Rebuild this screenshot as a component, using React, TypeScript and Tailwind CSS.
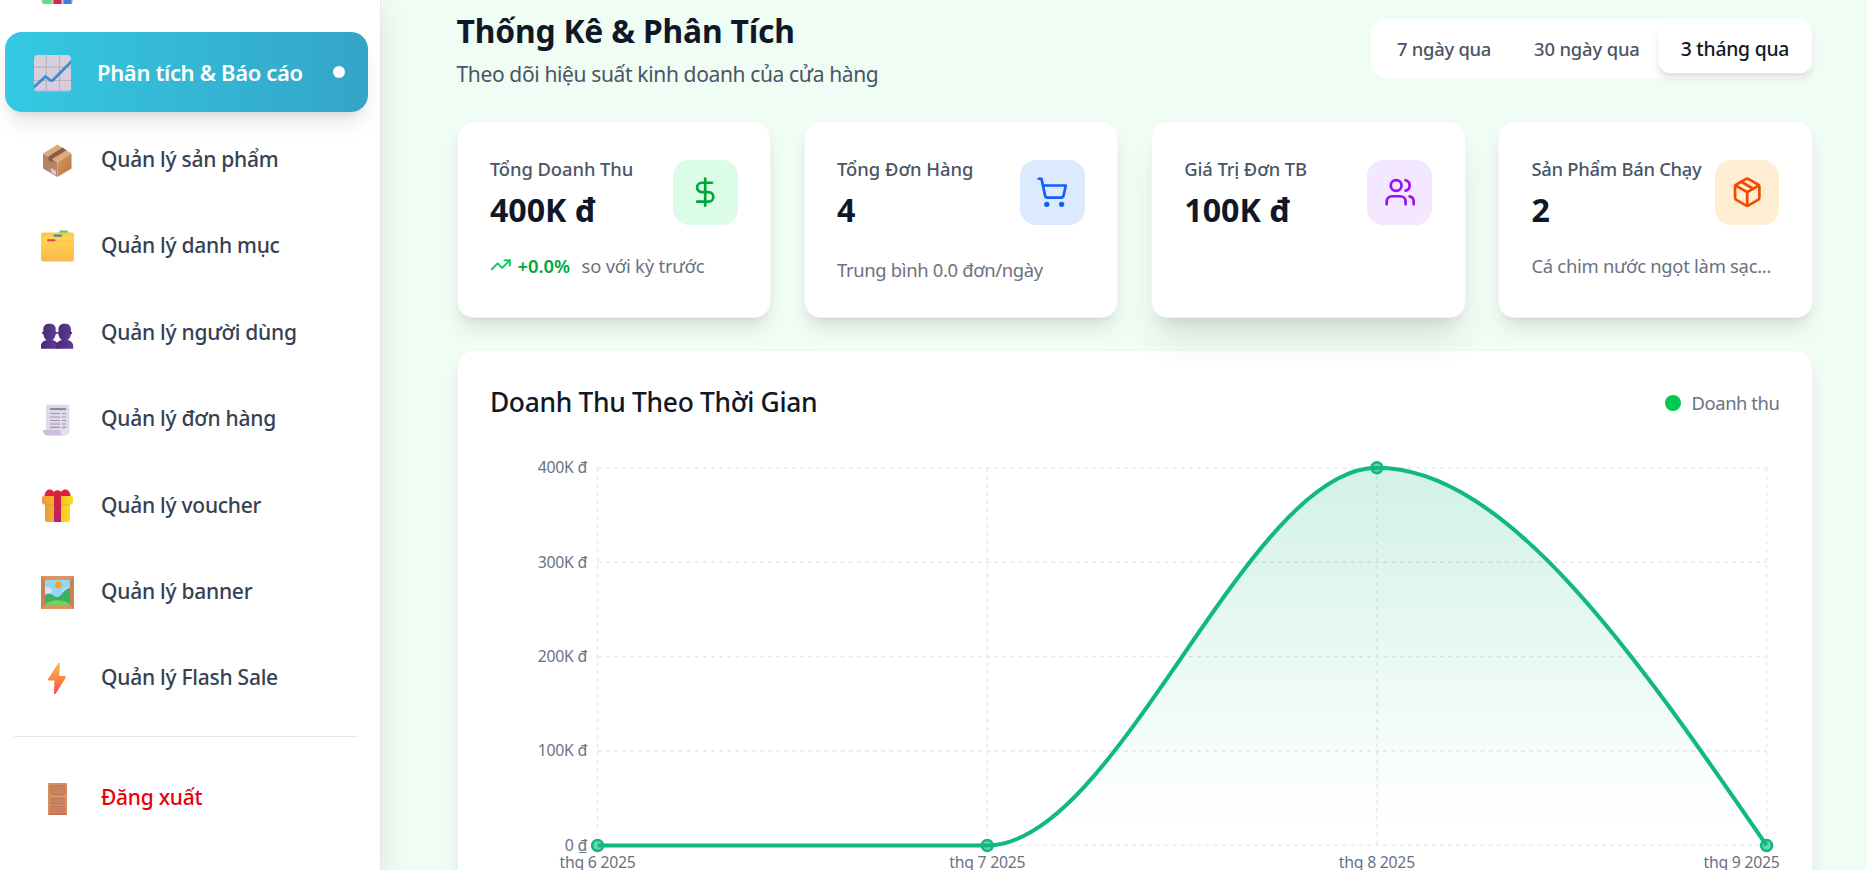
import type { ReactNode } from "react";
import { DollarSign, Package, ShoppingCart, TrendingUp, Users } from "lucide-react";

/* ---------- sidebar icons ---------- */

const BarChartIcon = () => (
  <svg viewBox="0 0 33 4" className="block h-[4px] w-[33px]">
    <path d="M0 0h32v1.5a3 3 0 0 1-3 2.5H3A3 3 0 0 1 0 1.500z" fill="#cfc6dc" />
    <rect x="2" y="0" width="8.500" height="4" fill="#5fdf85" />
    <rect x="12.500" y="0" width="8" height="4" fill="#d8244f" />
    <rect x="22.500" y="0" width="8" height="4" fill="#3d7ddb" />
  </svg>
);

const TrendChartIcon = () => (
  <svg viewBox="0 0 37 37" className="block size-[37px]">
    <defs>
      <linearGradient id="tc" x1="0" y1="0" x2="0" y2="1">
        <stop offset="0" stopColor="#d6d2dc" />
        <stop offset="0.930" stopColor="#d7cce2" />
        <stop offset="1" stopColor="#b79ccb" />
      </linearGradient>
      <clipPath id="tcc">
        <rect width="37" height="37" rx="4" />
      </clipPath>
    </defs>
    <g clipPath="url(#tcc)">
      <rect width="37" height="37" fill="url(#tc)" />
      <path d="M12.200 0v37M25.500 0v37M0 12.200h37M0 25.500h37" stroke="#b9b2bf" strokeWidth="1.200" />
      <path d="M-1 33L11.500 21.500L16.500 25.500Q17.800 26 19 25L38 6" fill="none" stroke="#3c8ad6" strokeWidth="2.800" strokeLinejoin="round" />
    </g>
  </svg>
);

const PackageIcon = () => (
  <svg viewBox="0 0 33 33" className="block size-[33px]">
    <defs>
      <linearGradient id="pkr" x1="0" y1="0" x2="1" y2="1">
        <stop offset="0" stopColor="#cf9a6c" />
        <stop offset="1" stopColor="#bd7338" />
      </linearGradient>
      <linearGradient id="pkl" x1="0" y1="0" x2="0" y2="1">
        <stop offset="0" stopColor="#b48063" />
        <stop offset="1" stopColor="#c08468" />
      </linearGradient>
    </defs>
    <path d="M2 9.500L16.500 18V33L2 24.500z" fill="url(#pkl)" />
    <path d="M30.500 9.500L16.500 18V33l14-8.500z" fill="url(#pkr)" />
    <path d="M16.500 0.500L30.500 9.500L16.500 18L2 9.500z" fill="#dbab7c" />
    <path d="M21.500 3.500L25.500 6.200L11.500 14.700V18.500L7.500 16.200V12.500z" fill="#8a5d49" />
    <path d="M10 24l5 2.800v4.400l-5-2.900z" fill="#d5c6dd" />
  </svg>
);

const FolderIcon = () => (
  <svg viewBox="0 0 33 33" className="block size-[33px]">
    <defs>
      <linearGradient id="fd" x1="0" y1="0" x2="0" y2="1">
        <stop offset="0" stopColor="#ffd34d" />
        <stop offset="1" stopColor="#fcb552" />
      </linearGradient>
    </defs>
    <rect x="18.500" y="0.500" width="8.500" height="4" rx="1.200" fill="#46cb7d" />
    <path d="M0 4.500a2 2 0 0 1 2-2h29a2 2 0 0 1 2 2V14H0z" fill="#fdca45" />
    <path d="M0 8.500a2 2 0 0 1 2-2h29a2 2 0 0 1 2 2V16H0z" fill="#ffd254" />
    <path d="M0 13a2 2 0 0 1 2-2h29a2 2 0 0 1 2 2v16a2.500 2.500 0 0 1-2.500 2.500h-28A2.500 2.500 0 0 1 0 29z" fill="url(#fd)" />
    <path d="M15 11.200H32" stroke="#f3bb40" strokeWidth="0.700" />
    <rect x="12.500" y="4.600" width="8.500" height="2.100" rx="1" fill="#3e86b8" />
    <rect x="6" y="9.200" width="8.500" height="2.100" rx="1" fill="#ef3a52" />
  </svg>
);

const PeopleIcon = () => (
  <svg viewBox="0 0 33 33" className="block size-[33px]">
    <defs>
      <linearGradient id="pp" x1="0" y1="0" x2="1" y2="0">
        <stop offset="0" stopColor="#4a2a78" />
        <stop offset="1" stopColor="#5f3b96" />
      </linearGradient>
    </defs>
    {[0, 15.200].map((x) => (
      <g key={x} transform={`translate(${x} 4.300)`} fill="url(#pp)">
        <path d="M8.500 3.500c4 0 6.200 2 6.200 5.500v4c0 4-2.500 7.500-6.200 7.500S2.300 17 2.300 13V9c0-3.500 2.200-5.500 6.200-5.500z" />
        <circle cx="2.300" cy="12.700" r="1.300" />
        <circle cx="14.700" cy="12.700" r="1.300" />
        <path d="M0 28.500v-3c0-3 2.500-5 6-5.700V18h5v1.800c3.500.700 6 2.700 6 5.700v3z" />
      </g>
    ))}
  </svg>
);

const ReceiptIcon = () => (
  <svg viewBox="0 0 33 33" className="block size-[33px]">
    <path d="M5 1l1.900 1.500L8.900 1l1.900 1.500L12.800 1l1.900 1.500L16.700 1l1.900 1.500L20.600 1l1.900 1.500L24.500 1l1.900 1.500L28.300 1V29H5z" fill="#dfd9e8" />
    <path d="M9 6h16" stroke="#8f8a99" strokeWidth="2.200" />
    <path d="M9 10.500h10M21 10.500h4M9 14h10M21 14h4M9 17.500h10M21 17.500h4M9 21h10M21 21h4M9 24.300h10M21 24.300h4" stroke="#9d99a6" strokeWidth="1.200" />
    <path d="M2 27h17.500c0 3.500 1.500 5.500 5 5.500H7c-3 0-5-1.800-5-5.500z" fill="#cdbde0" />
    <path d="M19.500 27c0 3.500 2 5.500 4.700 5.500s4.100-2 4.100-5V25z" fill="#e4dded" />
  </svg>
);

const GiftIcon = () => (
  <svg viewBox="0 0 33 33" className="block size-[33px]">
    <defs>
      <linearGradient id="gf" x1="0" y1="0" x2="1" y2="0">
        <stop offset="0" stopColor="#f0983a" />
        <stop offset="1" stopColor="#fbdc1f" />
      </linearGradient>
      <linearGradient id="gr" x1="0" y1="0" x2="0" y2="1">
        <stop offset="0" stopColor="#de2038" />
        <stop offset="1" stopColor="#b42468" />
      </linearGradient>
    </defs>
    <path d="M4 14h25v17a2 2 0 0 1-2 2H6a2 2 0 0 1-2-2z" fill="url(#gf)" />
    <path d="M3.500 6C4 2 7 0 9.500.600 12 1.200 13 4 16.500 4S21 1.200 23.500.600C26 0 29 2 29.500 6v2h-26z" fill="#e02239" />
    <rect x="1" y="7" width="31" height="8.500" rx="2" fill="url(#gf)" />
    <path d="M4 16H29" stroke="#d98a2c" strokeWidth="0.900" opacity="0.600" />
    <path d="M13 4a3.500 2.800 0 0 1 7 0v29h-7z" fill="url(#gr)" />
  </svg>
);

const PictureIcon = () => (
  <svg viewBox="0 0 33 33" className="block size-[33px]">
    <rect width="33" height="33" rx="0.800" fill="#dc9467" />
    <path d="M0 0L4 4V29L0 33zM33 0L29 4V29L33 33z" fill="#cb8158" />
    <rect x="4" y="4" width="25" height="25" fill="#93d8f3" />
    <circle cx="17.300" cy="9" r="3.400" fill="#f3a42e" />
    <path d="M4 11c4-.500 7 1.500 7 4 0 1.500-1 2-2 2H4zM29 11.500c-4-.500-7 1.500-8.500 5.500H29z" fill="#e6def3" />
    <path d="M4 19.500c3-2 6-2 9 .500 2 1.500 4 1.500 6 0 3-3 5-7.500 10-8V29H4z" fill="#37b368" />
    <path d="M4 29c3-6.500 22-6.500 25 0z" fill="#7cce5b" />
  </svg>
);

const BoltIcon = () => (
  <svg viewBox="0 0 33 33" className="block size-[33px]">
    <defs>
      <linearGradient id="bt" x1="0" y1="0" x2="0" y2="1">
        <stop offset="0" stopColor="#fdbb44" />
        <stop offset="0.550" stopColor="#fb8346" />
        <stop offset="1" stopColor="#f5404f" />
      </linearGradient>
    </defs>
    <path d="M17.200 1.200c.600-.900 1.800-.600 1.700.400l-.600 12.400h5.600c.900 0 1.300.800.900 1.500L15 31.300c-.700 1.100-2 .800-1.900-.400l.300-12.400H8c-.900 0-1.300-.800-.900-1.500z" fill="url(#bt)" />
  </svg>
);

const DoorIcon = () => (
  <svg viewBox="0 0 33 33" className="block size-[33px]">
    <rect x="7" y="1" width="19" height="32" rx="1" fill="#d98c5f" />
    <rect x="8" y="31" width="17" height="2" fill="#c4705f" />
    <g fill="#c48463" stroke="#b37351" strokeWidth="0.800">
      <rect x="9.800" y="3.500" width="13.500" height="9" rx="1" />
      <rect x="9.800" y="16.500" width="13.500" height="5.500" rx="1.500" />
      <rect x="9.800" y="24.500" width="13.500" height="5" rx="1.500" />
    </g>
    <circle cx="23.700" cy="14.700" r="1.400" fill="#e9a323" />
  </svg>
);

const navItems: { label: string; icon: ReactNode }[] = [
  { label: "Quản lý sản phẩm", icon: <PackageIcon /> },
  { label: "Quản lý danh mục", icon: <FolderIcon /> },
  { label: "Quản lý người dùng", icon: <PeopleIcon /> },
  { label: "Quản lý đơn hàng", icon: <ReceiptIcon /> },
  { label: "Quản lý voucher", icon: <GiftIcon /> },
  { label: "Quản lý banner", icon: <PictureIcon /> },
  { label: "Quản lý Flash Sale", icon: <BoltIcon /> },
];

function Sidebar() {
  return (
    <aside className="z-10 flex h-full w-[381px] shrink-0 flex-col border-r border-gray-200 bg-white shadow-[0_10px_28px_2px_rgba(0,0,0,0.09)]">
      <div className="h-[32px] shrink-0 pl-[41px]">
        <BarChartIcon />
      </div>
      <div className="ml-[5px] flex h-[80px] w-[363px] shrink-0 items-center rounded-[17px] bg-linear-to-r from-[#34c9e4] to-[#34a5c6] pl-[28.500px] shadow-[0_14px_21px_-4px_rgba(0,0,0,0.1),0_6px_9px_-5px_rgba(0,0,0,0.1)]">
        <div className="mt-[3px]">
          <TrendChartIcon />
        </div>
        <span className="ml-[26.500px] grow pt-[1px] text-[22px] font-semibold tracking-[-0.350px] whitespace-nowrap text-white">
          Phân tích &amp; Báo cáo
        </span>
        <span className="mr-[23px] mb-[1px] size-[12px] rounded-full bg-white" />
      </div>
      <nav className="mt-[3px] flex flex-col">
        {navItems.map((item) => (
          <a key={item.label} className="flex h-[86.400px] items-center pl-[41px]">
            <span className="mt-[4px]">{item.icon}</span>
            <span className="ml-[27px] pt-[3px] text-[21px] font-medium tracking-[-0.250px] whitespace-nowrap text-gray-700">
              {item.label}
            </span>
          </a>
        ))}
      </nav>
      <hr className="mt-[16px] mr-[22px] ml-[14px] border-gray-200" />
      <a className="mt-[17px] flex h-[86.400px] shrink-0 items-center pl-[41px]">
        <span className="mt-[4px]">
          <DoorIcon />
        </span>
        <span className="ml-[27px] pt-[2px] text-[21px] font-medium tracking-[-0.270px] text-[#e7000b]">Đăng xuất</span>
      </a>
    </aside>
  );
}

/* ---------- stat cards ---------- */

type StatCardProps = {
  label: string;
  labelClass: string;
  value: string;
  icon: ReactNode;
  iconClass: string;
  raised?: boolean;
  children?: ReactNode;
};

function StatCard({ label, labelClass, value, icon, iconClass, raised, children }: StatCardProps) {
  return (
    <section
      className={
        "rounded-[16.200px] border border-gray-100 bg-white p-[32.400px] " +
        (raised
          ? "relative z-10 shadow-[0_27px_34px_-7px_rgba(0,0,0,0.1),0_11px_14px_-8px_rgba(0,0,0,0.1)]"
          : "shadow-[0_13.500px_20px_-4px_rgba(0,0,0,0.1),0_5.400px_8px_-5.400px_rgba(0,0,0,0.1)]")
      }
    >
      <div className="flex items-center justify-between">
        <div className="pt-[1px]">
          <p className={"text-[18.400px] leading-[27px] font-medium whitespace-nowrap text-gray-600 " + labelClass}>
            {label}
          </p>
          <p className="mt-[5.400px] text-[32.200px] leading-[43.200px] font-bold text-gray-900">{value}</p>
        </div>
        <div className={"flex size-[64.800px] shrink-0 items-center justify-center rounded-[16.200px] " + iconClass}>
          {icon}
        </div>
      </div>
      {children}
    </section>
  );
}

/* ---------- revenue chart ---------- */

const xs = [107.600, 497.300, 886.900, 1276.600];
const ys = [27.800, 122.200, 216.600, 311, 405.400];
const yLabels = ["400K đ", "300K đ", "200K đ", "100K đ", "0 ₫"];
const months = ["thg 6 2025", "thg 7 2025", "thg 8 2025", "thg 9 2025"];
const points = [
  [107.600, 405.400],
  [497.300, 405.400],
  [886.900, 27.800],
  [1276.600, 405.400],
];
const curve = "M107.6 405.4H497.3C627.2 405.4 757 27.8 886.9 27.8C1016.8 27.8 1146.7 216.6 1276.6 405.4";

function RevenueChart() {
  return (
    <svg viewBox="0 0 1289 500" className="mt-[19.600px] ml-[0.400px] block h-[500px] w-[1289px] overflow-visible">
      <defs>
        <linearGradient id="revenue" x1="0" y1="0" x2="0" y2="1">
          <stop offset="5%" stopColor="#10b981" stopOpacity="0.18" />
          <stop offset="95%" stopColor="#10b981" stopOpacity="0" />
        </linearGradient>
      </defs>
      <g stroke="#e5e7eb" strokeWidth="1.350" strokeDasharray="4.050 4.050">
        {ys.map((y) => (
          <line key={y} x1={107.600} x2={1276.600} y1={y} y2={y} />
        ))}
        {xs.map((x) => (
          <line key={x} x1={x} x2={x} y1={27.800} y2={405.400} />
        ))}
      </g>
      <path d={curve + "H107.6Z"} fill="url(#revenue)" />
      <path d={curve} fill="none" stroke="#10b981" strokeWidth="4.050" />
      {points.map(([x, y]) => (
        <circle key={x} cx={x} cy={y} r="5.400" fill="#10b981" fillOpacity="0.6" stroke="#10b981" strokeWidth="2.700" />
      ))}
      <g className="fill-gray-500 text-[15.800px] tracking-[-0.250px]">
        {yLabels.map((label, i) => (
          <text key={label} x="96.900" y={ys[i] + 5.300} textAnchor="end">
            {label}
          </text>
        ))}
        {months.map((m, i) => (
          <text key={m} x={i === 3 ? 1289.600 : xs[i]} y="428" textAnchor={i === 3 ? "end" : "middle"}>
            {m}
          </text>
        ))}
      </g>
    </svg>
  );
}

/* ---------- page ---------- */

export default function App() {
  return (
    <div className="flex h-[870px] w-[1867px] overflow-hidden bg-[#f0fdf4] font-['Noto_Sans',sans-serif]">
      <Sidebar />
      <main className="flex w-[1431.800px] shrink-0 flex-col pl-[75.500px]">
        <header className="flex h-[121px] shrink-0 items-start justify-between">
          <div className="pt-[11.200px]">
            <h1 className="text-[31.800px] leading-[40px] font-bold tracking-[-0.170px] text-gray-900">
              Thống Kê &amp; Phân Tích
            </h1>
            <p className="mt-[7px] text-[21px] leading-[32px] tracking-[-0.360px] text-gray-600">
              Theo dõi hiệu suất kinh doanh của cửa hàng
            </p>
          </div>
          <div className="mt-[19px] flex h-[59px] w-[442.300px] rounded-[16.200px] bg-white p-[5.400px] text-[18.400px] font-medium whitespace-nowrap">
            <button className="w-[136.500px] tracking-[-0.270px] text-gray-600">7 ngày qua</button>
            <button className="w-[149.500px] tracking-[-0.150px] text-gray-600">30 ngày qua</button>
            <button className="w-[146px] scale-105 rounded-[10.800px] bg-white pt-[2px] tracking-[-0.200px] text-gray-900 shadow-[0_5.400px_8px_-1.350px_rgba(0,0,0,0.1),0_2.700px_5.400px_-2.700px_rgba(0,0,0,0.1)]">
              3 tháng qua
            </button>
          </div>
        </header>

        <div className="grid h-[196.800px] shrink-0 grid-cols-4 gap-[32.400px]">
          <StatCard
            label="Tổng Doanh Thu"
            labelClass="tracking-[-0.080px]"
            value="400K đ"
            iconClass="bg-green-100 text-green-600"
            icon={<DollarSign size={32.400} />}
          >
            <div className="mt-[20.600px] flex items-center text-[18.400px] leading-[27px] whitespace-nowrap">
              <TrendingUp size={21.600} className="text-green-500" />
              <span className="ml-[6px] font-semibold text-green-600">+0.0%</span>
              <span className="ml-[11.400px] tracking-[-0.200px] text-gray-500">so với kỳ trước</span>
            </div>
          </StatCard>
          <StatCard
            label="Tổng Đơn Hàng"
            labelClass="tracking-[-0.020px]"
            value="4"
            iconClass="bg-blue-100 text-blue-600"
            icon={<ShoppingCart size={32.400} />}
          >
            <p className="mt-[24.600px] text-[18.400px] leading-[27px] tracking-[-0.330px] whitespace-nowrap text-gray-500">
              Trung bình 0.0 đơn/ngày
            </p>
          </StatCard>
          <StatCard
            label="Giá Trị Đơn TB"
            labelClass="tracking-[-0.120px]"
            value="100K đ"
            iconClass="bg-purple-100 text-purple-600"
            icon={<Users size={32.400} />}
            raised
          />
          <StatCard
            label="Sản Phẩm Bán Chạy"
            labelClass="tracking-[-0.270px]"
            value="2"
            iconClass="bg-orange-100 text-[#f54900]"
            icon={<Package size={32.400} />}
          >
            <p className="mt-[20.600px] text-[18.400px] leading-[27px] tracking-[-0.270px] whitespace-nowrap text-gray-500">
              Cá chim nước ngọt làm sạc...
            </p>
          </StatCard>
        </div>

        <section className="mt-[32.400px] h-[600px] shrink-0 rounded-[16.200px] border border-gray-100 bg-white px-[32.400px] pt-[34px] shadow-[0_13.500px_20px_-4px_rgba(0,0,0,0.1),0_5.400px_8px_-5.400px_rgba(0,0,0,0.1)]">
          <div className="flex h-[35px] items-center justify-between">
            <h2 className="text-[26.400px] leading-[35px] font-medium tracking-[-0.310px] text-gray-900">
              Doanh Thu Theo Thời Gian
            </h2>
            <div className="flex items-center">
              <span className="size-[16.200px] rounded-full bg-[#00c950]" />
              <span className="ml-[10.500px] text-[18.400px] leading-[27px] tracking-[-0.440px] text-gray-500">Doanh thu</span>
            </div>
          </div>
          <RevenueChart />
        </section>
      </main>
    </div>
  );
}
